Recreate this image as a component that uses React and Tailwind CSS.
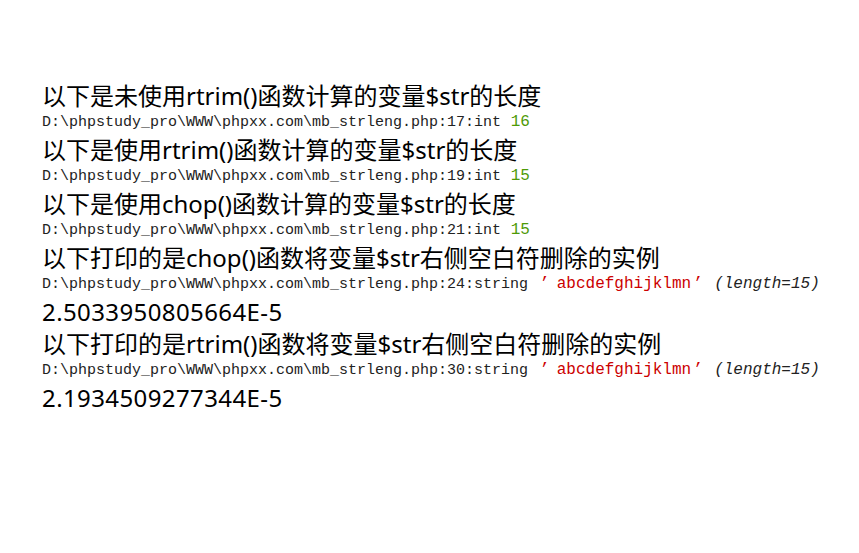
const head = "font-['Noto_Sans','Noto_Sans_CJK_SC',sans-serif] text-[24px] leading-[32px] text-black";
const mono = "font-['Liberation_Mono',monospace] text-[16px] leading-[20px] h-[20px] text-[#222] mb-[2px] whitespace-pre";
const path = "D:\\phpstudy_pro\\WWW\\phpxx.com\\mb_strleng.php:";

function IntDump({ line, value }) {
  return (
    <div className={mono}>
      <small className="text-[15px]">{path}{line}:int</small>{" "}
      <span className="text-[#4e9a06]">{value}</span>
    </div>
  );
}

function StrDump({ line }) {
  return (
    <div className={mono}>
      <small className="text-[15px]">{path}{line}:string</small>{" "}
      <span className="text-[#cc0000]">
        <span className="inline-block w-[19px] pl-[2px] leading-[20px]">’</span>abcdefghijklmn<span className="inline-block w-[19px] pl-[2px] leading-[20px]">’</span>
      </span>
      <i className="ml-[4px]">(length=15)</i>
    </div>
  );
}

export default function App() {
  return (
    <div className="min-h-screen bg-white pl-[42px] pt-[80px]">
      <div className={head}>以下是未使用rtrim()函数计算的变量$str的长度</div>
      <IntDump line={17} value={16} />
      <div className={head}>以下是使用rtrim()函数计算的变量$str的长度</div>
      <IntDump line={19} value={15} />
      <div className={head}>以下是使用chop()函数计算的变量$str的长度</div>
      <IntDump line={21} value={15} />
      <div className={head}>以下打印的是chop()函数将变量$str右侧空白符删除的实例</div>
      <StrDump line={24} />
      <div className={head + " leading-[31px] tracking-[0.4px]"}>2.5033950805664E-5</div>
      <div className={head}>以下打印的是rtrim()函数将变量$str右侧空白符删除的实例</div>
      <StrDump line={30} />
      <div className={head + " leading-[31px] tracking-[0.4px]"}>2.1934509277344E-5</div>
    </div>
  );
}
